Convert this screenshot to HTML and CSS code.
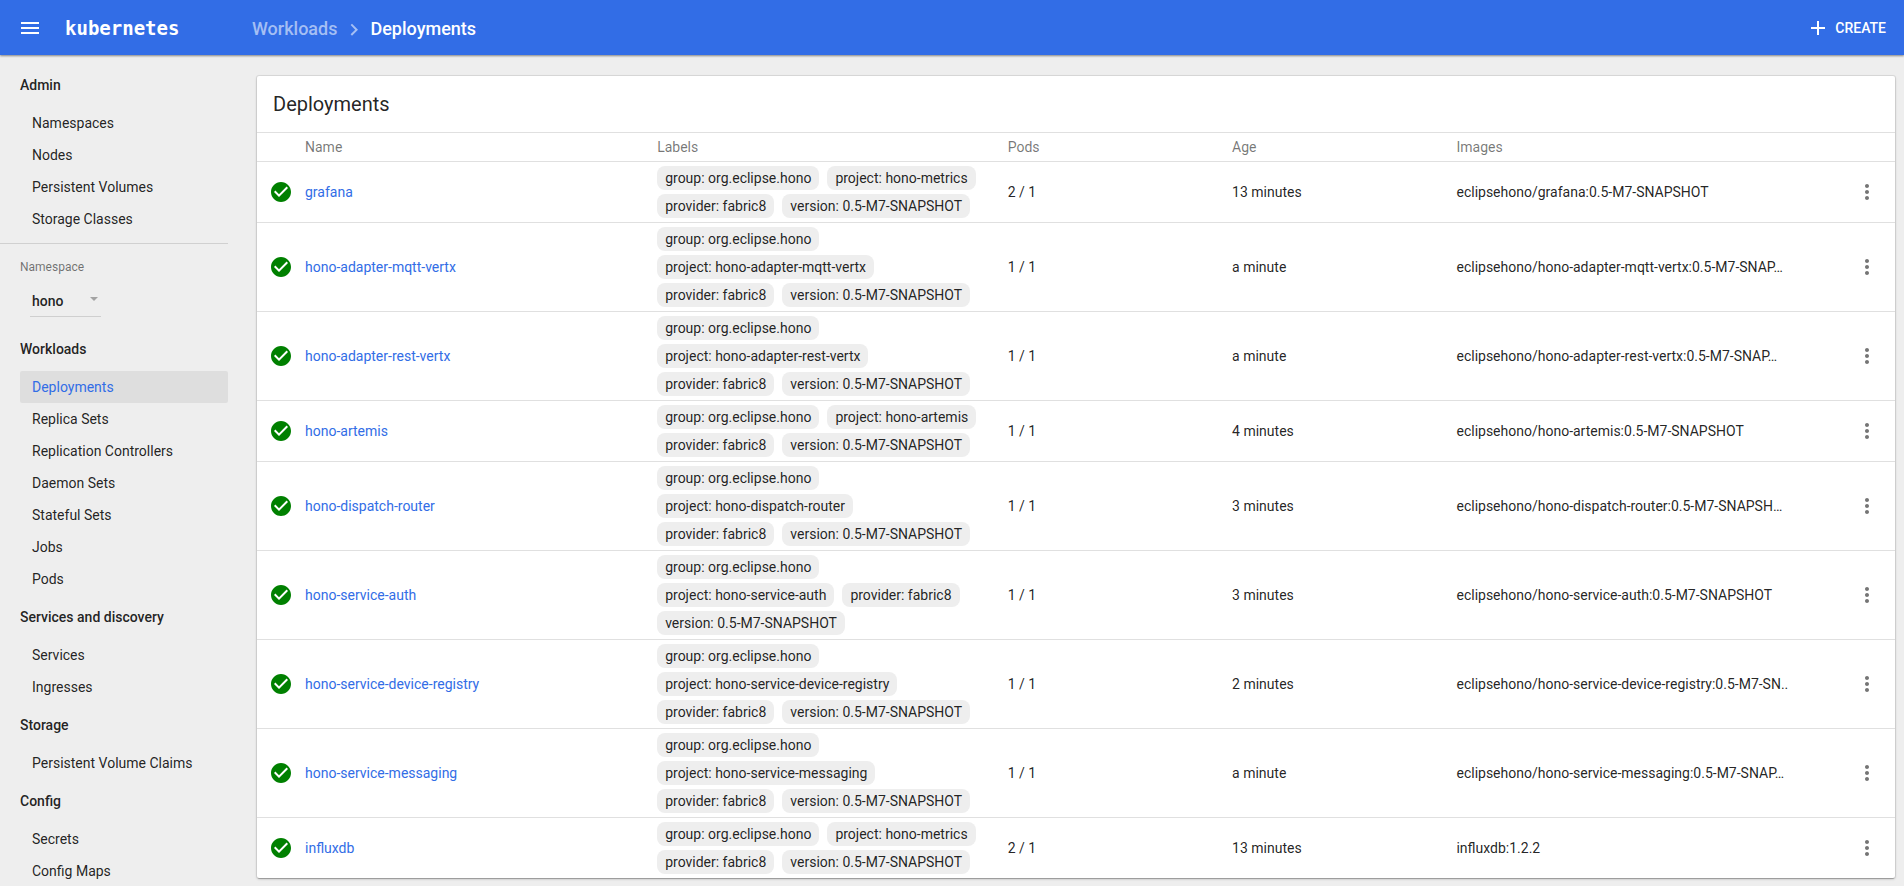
FILE: index.html
```html
<!DOCTYPE html>
<html lang="en">
<head>
<meta charset="utf-8">
<title>Deployments - Kubernetes Dashboard</title>
<link rel="stylesheet" href="styles.css">
</head>
<body>
<svg class="sprite" aria-hidden="true">
  <symbol id="ok" viewBox="0 0 24 24"><path fill="currentColor" d="M12 2C6.48 2 2 6.48 2 12s4.48 10 10 10 10-4.48 10-10S17.52 2 12 2zm-2 15l-5-5 1.41-1.41L10 14.17l7.59-7.59L19 8l-9 9z"/></symbol>
  <symbol id="more" viewBox="0 0 24 24"><path fill="currentColor" d="M12 8c1.1 0 2-.9 2-2s-.9-2-2-2-2 .9-2 2 .9 2 2 2zm0 2c-1.1 0-2 .9-2 2s.9 2 2 2 2-.9 2-2-.9-2-2-2zm0 6c-1.1 0-2 .9-2 2s.9 2 2 2 2-.9 2-2-.9-2-2-2z"/></symbol>
</svg>
<header class="toolbar">
  <div class="brand">
    <button class="icon-button" type="button" aria-label="Toggle menu">
      <svg class="icon" viewBox="0 0 24 24"><path fill="currentColor" d="M3 18h18v-2H3v2zm0-5h18v-2H3v2zm0-7v2h18V6H3z"/></svg>
    </button>
    <a class="logo" href="#">kubernetes</a>
  </div>
  <nav class="breadcrumbs" aria-label="Breadcrumbs">
    <a class="crumb-parent" href="#">Workloads</a>
    <svg class="chevron" viewBox="0 0 24 24"><path fill="currentColor" d="M8.6 16.3l4.6-4.6-4.6-4.6L10 5.7l6 6-6 6z"/></svg>
    <span>Deployments</span>
  </nav>
  <button class="create" type="button">
    <svg class="icon" viewBox="0 0 24 24"><path fill="currentColor" d="M19 13h-6v6h-2v-6H5v-2h6V5h2v6h6v2z"/></svg>
    CREATE
  </button>
</header>
<div class="layout">
  <nav class="sidebar" aria-label="Main">
    <h2>Admin</h2>
    <a href="#">Namespaces</a>
    <a href="#">Nodes</a>
    <a href="#">Persistent Volumes</a>
    <a href="#">Storage Classes</a>
    <div class="namespace">
      <label for="namespace">Namespace</label>
      <div class="select">
        <select id="namespace"><option>hono</option></select>
        <svg class="caret" viewBox="0 0 8 4"><path fill="currentColor" d="M0 0h8L4 4z"/></svg>
      </div>
    </div>
    <h2>Workloads</h2>
    <a class="active" href="#">Deployments</a>
    <a href="#">Replica Sets</a>
    <a href="#">Replication Controllers</a>
    <a href="#">Daemon Sets</a>
    <a href="#">Stateful Sets</a>
    <a href="#">Jobs</a>
    <a href="#">Pods</a>
    <h2>Services and discovery</h2>
    <a href="#">Services</a>
    <a href="#">Ingresses</a>
    <h2>Storage</h2>
    <a href="#">Persistent Volume Claims</a>
    <h2>Config</h2>
    <a href="#">Secrets</a>
    <a href="#">Config Maps</a>
  </nav>
  <main class="content">
    <section class="card">
      <h1>Deployments</h1>
      <table>
        <colgroup><col class="c-status"><col class="c-name"><col class="c-labels"><col class="c-pods"><col class="c-age"><col class="c-images"><col></colgroup>
        <thead><tr><th></th><th>Name</th><th>Labels</th><th>Pods</th><th>Age</th><th>Images</th><th></th></tr></thead>
        <tbody id="rows"></tbody>
      </table>
    </section>
  </main>
</div>
<script src="app.js"></script>
</body>
</html>
```
FILE: app.js
```js
const deployments = [
  ["grafana", "hono-metrics", "2 / 1", "13 minutes", "eclipsehono/grafana:0.5-M7-SNAPSHOT"],
  ["hono-adapter-mqtt-vertx", "hono-adapter-mqtt-vertx", "1 / 1", "a minute", "eclipsehono/hono-adapter-mqtt-vertx:0.5-M7-SNAP…"],
  ["hono-adapter-rest-vertx", "hono-adapter-rest-vertx", "1 / 1", "a minute", "eclipsehono/hono-adapter-rest-vertx:0.5-M7-SNAP…"],
  ["hono-artemis", "hono-artemis", "1 / 1", "4 minutes", "eclipsehono/hono-artemis:0.5-M7-SNAPSHOT"],
  ["hono-dispatch-router", "hono-dispatch-router", "1 / 1", "3 minutes", "eclipsehono/hono-dispatch-router:0.5-M7-SNAPSH…"],
  ["hono-service-auth", "hono-service-auth", "1 / 1", "3 minutes", "eclipsehono/hono-service-auth:0.5-M7-SNAPSHOT"],
  ["hono-service-device-registry", "hono-service-device-registry", "1 / 1", "2 minutes", "eclipsehono/hono-service-device-registry:0.5-M7-SN.."],
  ["hono-service-messaging", "hono-service-messaging", "1 / 1", "a minute", "eclipsehono/hono-service-messaging:0.5-M7-SNAP…"],
  ["influxdb", "hono-metrics", "2 / 1", "13 minutes", "influxdb:1.2.2"]
];

// Labels this long keep extra room on their right.
const LONG_LABEL = 20;

document.getElementById("rows").innerHTML = deployments.map(([name, project, pods, age, image]) => `
  <tr>
    <td class="status"><svg class="icon" role="img" aria-label="Running"><use href="#ok"/></svg></td>
    <td><a href="#">${name}</a></td>
    <td class="labels"><ul>
      <li>group: org.eclipse.hono</li>
      <li${project.length >= LONG_LABEL ? ' class="long"' : ""}>project: ${project}</li>
      <li>provider: fabric8</li>
      <li>version: 0.5-M7-SNAPSHOT</li>
    </ul></td>
    <td>${pods}</td>
    <td>${age}</td>
    <td class="image">${image}</td>
    <td class="actions"><button class="icon-button" type="button" aria-label="Actions for ${name}"><svg class="icon"><use href="#more"/></svg></button></td>
  </tr>`).join("");
```
FILE: styles.css
```css
* { box-sizing: border-box; }

body {
  display: flex;
  flex-direction: column;
  height: 100vh;
  margin: 0;
  overflow: hidden;
  background: #eee;
  color: rgba(0, 0, 0, .87);
  font: 14px/20px Roboto, sans-serif;
}

a { color: inherit; text-decoration: none; }

button {
  padding: 0;
  border: 0;
  background: none;
  color: inherit;
  font: inherit;
  cursor: pointer;
}

.sprite { position: absolute; width: 0; height: 0; }
.icon { display: block; flex: none; width: 24px; height: 24px; }
.icon-button { display: block; width: 24px; height: 24px; }

.toolbar {
  z-index: 1;
  display: flex;
  flex: none;
  align-items: center;
  height: 55px;
  padding: 0 18px;
  background: #326de6;
  box-shadow: 0 1px 2px rgba(0, 0, 0, .45);
  color: #fff;
}

.brand { display: flex; align-items: center; gap: 23px; width: 234px; }
.logo { font: bold 19px/24px "DejaVu Sans Mono", monospace; }
.breadcrumbs { display: flex; flex: 1; align-items: center; padding-top: 2px; font-size: 18px; font-weight: 500; line-height: 24px; }
.crumb-parent, .chevron { color: rgba(255, 255, 255, .56); }
.chevron { width: 24px; height: 24px; margin: 2px 4px 0 5px; }
.create { display: flex; align-items: center; gap: 5px; font-weight: 500; }

.layout { display: flex; flex: 1; min-height: 0; }

.sidebar { flex: none; width: 228px; padding-top: 8px; overflow: hidden; }
.sidebar h2 { margin: 0; padding: 12px 20px; font-size: 14px; font-weight: 500; line-height: 20px; }
.sidebar a { display: block; margin-left: 20px; padding: 6px 12px; border-radius: 2px; }
.sidebar .active { background: #dedede; color: #326de6; }

.namespace { margin-top: 8px; padding: 13px 20px 10px; border-top: 1px solid #d0d0d0; }
.namespace label { display: block; color: rgba(0, 0, 0, .54); font-size: 12px; }
.select { position: relative; width: 71px; margin: 8px 0 0 10px; }
.select select {
  display: block;
  width: 100%;
  height: 32px;
  padding: 0 2px;
  border: 0;
  border-bottom: 1px solid #cfcfcf;
  border-radius: 0;
  background: none;
  color: inherit;
  font: 500 14px/20px Roboto, sans-serif;
  appearance: none;
}
.caret { position: absolute; top: 12px; right: 3px; width: 8px; height: 4px; color: #a3a3a3; pointer-events: none; }

.content { flex: 1; min-width: 0; padding: 21px 9px 8px 29px; overflow: hidden; }
.card { border-radius: 2px; background: #fff; box-shadow: 0 0 0 1px rgba(0, 0, 0, .07), 0 1px 3px rgba(0, 0, 0, .2), 0 2px 1px -1px rgba(0, 0, 0, .2); }
.card h1 { margin: 0; padding: 16px; font-size: 20px; font-weight: 400; line-height: 24px; }

table { width: 100%; border-collapse: separate; border-spacing: 0; table-layout: fixed; }
.c-status { width: 48px; }
.c-name { width: 21.5%; }
.c-labels, .c-images { width: 21.4%; }
.c-pods, .c-age { width: 13.7%; }
th, td { padding: 0 16px 0 0; border-top: 1px solid #e0e0e0; text-align: left; vertical-align: middle; }
th { height: 29px; color: rgba(0, 0, 0, .54); font-weight: 400; }
td a { color: #326de6; }
.status { padding: 0 0 0 12px; color: #008000; }
.labels { padding-right: 24px; }
.labels ul { display: flex; flex-wrap: wrap; gap: 4px 8px; margin: 0; padding: 4px 0; list-style: none; }
.labels li { padding: 2px 8px; border-radius: 8px; background: #eee; white-space: nowrap; }
.labels .long { margin-right: 24px; }
.image { overflow: hidden; padding-right: 8px; white-space: nowrap; }
.actions { padding-right: 16px; color: #757575; }
.actions button { margin-left: auto; }
```
